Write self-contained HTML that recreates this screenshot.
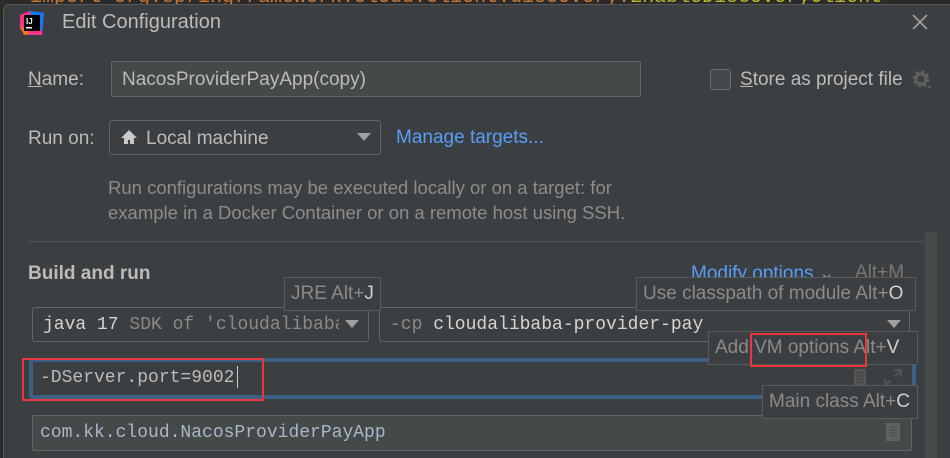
<!DOCTYPE html>
<html><head><meta charset="utf-8"><style>
*{box-sizing:border-box;margin:0;padding:0}
html,body{width:950px;height:458px;overflow:hidden}
body{background:#2b2b2b;font-family:"Liberation Sans",sans-serif;position:relative}
.a{position:absolute;white-space:nowrap}
.code{left:30px;top:-14px;font:20px "Liberation Mono",monospace;color:#cc7832}
.dlg{left:3px;top:4px;width:960px;height:470px;background:#3c3f41;border:1px solid #555;border-radius:6px}
.t{color:#bbbbbb;font-size:19px}
.in{border:1px solid #646464;border-radius:2px}
.mono{font-family:"Liberation Mono",monospace;font-size:18px}
.tip{background:#3c3f41;border:1px solid #5b5b5b;color:#8a8a8a;font-size:19px;padding:5px 6px;line-height:21px}
.tip b{font-weight:normal;color:#cfcfcf}
.red{border:2px solid #e8383d}
</style></head><body>
<div class="a code">import org.springframework.cloud.client.discovery.<span style="color:#bbb529">EnableDiscoveryClient</span></div>
<div class="a dlg"></div>
<svg class="a" style="left:20px;top:11px" width="24" height="24"><path d="M0 4L10 0L24 2L22 24L6 24L0 18z" fill="#fc318c"/><path d="M10 0L24 2L22 20L14 16z" fill="#087cfa"/><path d="M0 14L4 24L10 22z" fill="#fe7a16"/><rect x="4" y="4" width="16" height="16" fill="#000"/><text x="6" y="13" font-size="8" font-weight="bold" fill="#fff" font-family="Liberation Sans">IJ</text><rect x="6" y="16" width="6" height="1.5" fill="#fff"/></svg>
<div class="a" style="left:62px;top:11px;color:#bbbbbb;font-size:20px">Edit Configuration</div>
<svg class="a" style="left:911px;top:13px" width="18" height="18"><path d="M2 2L16 16M16 2L2 16" stroke="#a0a0a0" stroke-width="1.6"/></svg>
<div class="a t" style="left:28px;top:69px"><u>N</u>ame:</div>
<div class="a in" style="left:111px;top:61px;width:530px;height:36px;background:#45494a"></div>
<div class="a t" style="left:122px;top:69px">NacosProviderPayApp(copy)</div>
<div class="a" style="left:710px;top:69px;width:21px;height:21px;border:1px solid #6b6b6b;border-radius:3px;background:#43494a"></div>
<div class="a t" style="left:740px;top:69px"><u>S</u>tore as project file</div>
<svg class="a" style="left:912px;top:70px" width="22" height="22"><circle cx="9" cy="9" r="6.5" fill="none" stroke="#5e6060" stroke-width="4" stroke-dasharray="3 2.1"/><circle cx="9" cy="9" r="5" fill="none" stroke="#5e6060" stroke-width="3"/><path d="M15 16l5 0l-2.5 3z" fill="#5e6060"/></svg>
<div class="a t" style="left:28px;top:128px">Run on:</div>
<div class="a in" style="left:109px;top:120px;width:272px;height:35px;border-radius:3px"></div>
<svg class="a" style="left:120px;top:129px" width="18" height="16"><path d="M9 1L1 9h3v6h4v-4h2v4h4V9h3z" fill="#c9c9c9"/></svg>
<div class="a t" style="left:146px;top:128px">Local machine</div>
<svg class="a" style="left:357px;top:133px" width="14" height="9"><path d="M0 0h14L7 8z" fill="#a0a0a0"/></svg>
<div class="a" style="left:396px;top:127px;color:#589df6;font-size:19px">Manage targets...</div>
<div class="a" style="left:108px;top:175px;color:#8c8c8c;font-size:18.5px;line-height:25px">Run configurations may be executed locally or on a target: for<br>example in a Docker Container or on a remote host using SSH.</div>
<div class="a" style="left:27px;top:241px;width:908px;height:1px;background:#515151"></div>
<div class="a" style="left:925px;top:232px;width:12px;height:230px;background:#47494b"></div>
<div class="a" style="left:28px;top:263px;color:#bbbbbb;font-size:19px;font-weight:bold">Build and run</div>
<div class="a" style="left:691px;top:262px;color:#589df6;font-size:19px">Modify options <span style="color:#888">⌄</span></div>
<div class="a" style="left:855px;top:262px;color:#777;font-size:19px">Alt+M</div>
<div class="a in" style="left:32px;top:307px;width:337px;height:35px;border-radius:3px"></div>
<div class="a mono" style="left:43px;top:315px;color:#d4d4d4;width:296px;overflow:hidden">java 17 <span style="color:#8a8a8a">SDK of 'cloudalibaba</span></div>
<svg class="a" style="left:345px;top:320px" width="14" height="9"><path d="M0 0h14L7 8z" fill="#a0a0a0"/></svg>
<div class="a in" style="left:379px;top:307px;width:531px;height:35px;border-radius:3px"></div>
<div class="a mono" style="left:390px;top:315px;color:#d4d4d4"><span style="color:#8a8a8a">-cp</span> cloudalibaba-provider-pay</div>
<svg class="a" style="left:887px;top:320px" width="14" height="9"><path d="M0 0h14L7 8z" fill="#a0a0a0"/></svg>
<div class="a" style="left:29px;top:358px;width:887px;height:41px;border:4px solid #3d6185;border-radius:3px;background:#3c3f41"></div>
<div class="a mono" style="left:40px;top:368px;color:#bbbbbb">-DServer.port=9002</div>
<div class="a" style="left:237px;top:366px;width:1px;height:22px;background:#ccc"></div>
<svg class="a" style="left:853px;top:368px" width="14" height="20"><rect x="1" y="1" width="12" height="18" fill="#555"/><path d="M3 5h8M3 8h8M3 11h8M3 14h8" stroke="#3c3f41"/></svg>
<svg class="a" style="left:883px;top:368px" width="20" height="20"><path d="M11 2h7v7M18 2l-6 6M9 18H2v-7M2 18l6-6" stroke="#5a5a5a" fill="none" stroke-width="1.5"/></svg>
<div class="a red" style="left:22px;top:358px;width:242px;height:43px"></div>
<div class="a in" style="left:32px;top:415px;width:880px;height:36px;background:#45494a"></div>
<div class="a mono" style="left:40px;top:423px;color:#a9b7c6">com.kk.cloud.NacosProviderPayApp</div>
<svg class="a" style="left:885px;top:422px" width="16" height="20"><rect x="1" y="1" width="14" height="18" fill="#606363"/><path d="M4 5h8M4 8h8M4 11h8M4 14h8" stroke="#45494a"/></svg>
<div class="a tip" style="left:284px;top:277px;height:34px"><span style="color:#8a8a8a">JRE Alt+</span><b>J</b></div>
<div class="a tip" style="left:636px;top:277px;height:34px;width:280px">Use classpath of module Alt+<b>O</b></div>
<div class="a tip" style="left:708px;top:331px;height:34px;width:210px">Add VM options Alt+<b>V</b></div>
<div class="a red" style="left:750px;top:333px;width:117px;height:34px"></div>
<div class="a tip" style="left:762px;top:385px;height:34px;width:156px">Main class Alt+<b>C</b></div>
</body></html>
